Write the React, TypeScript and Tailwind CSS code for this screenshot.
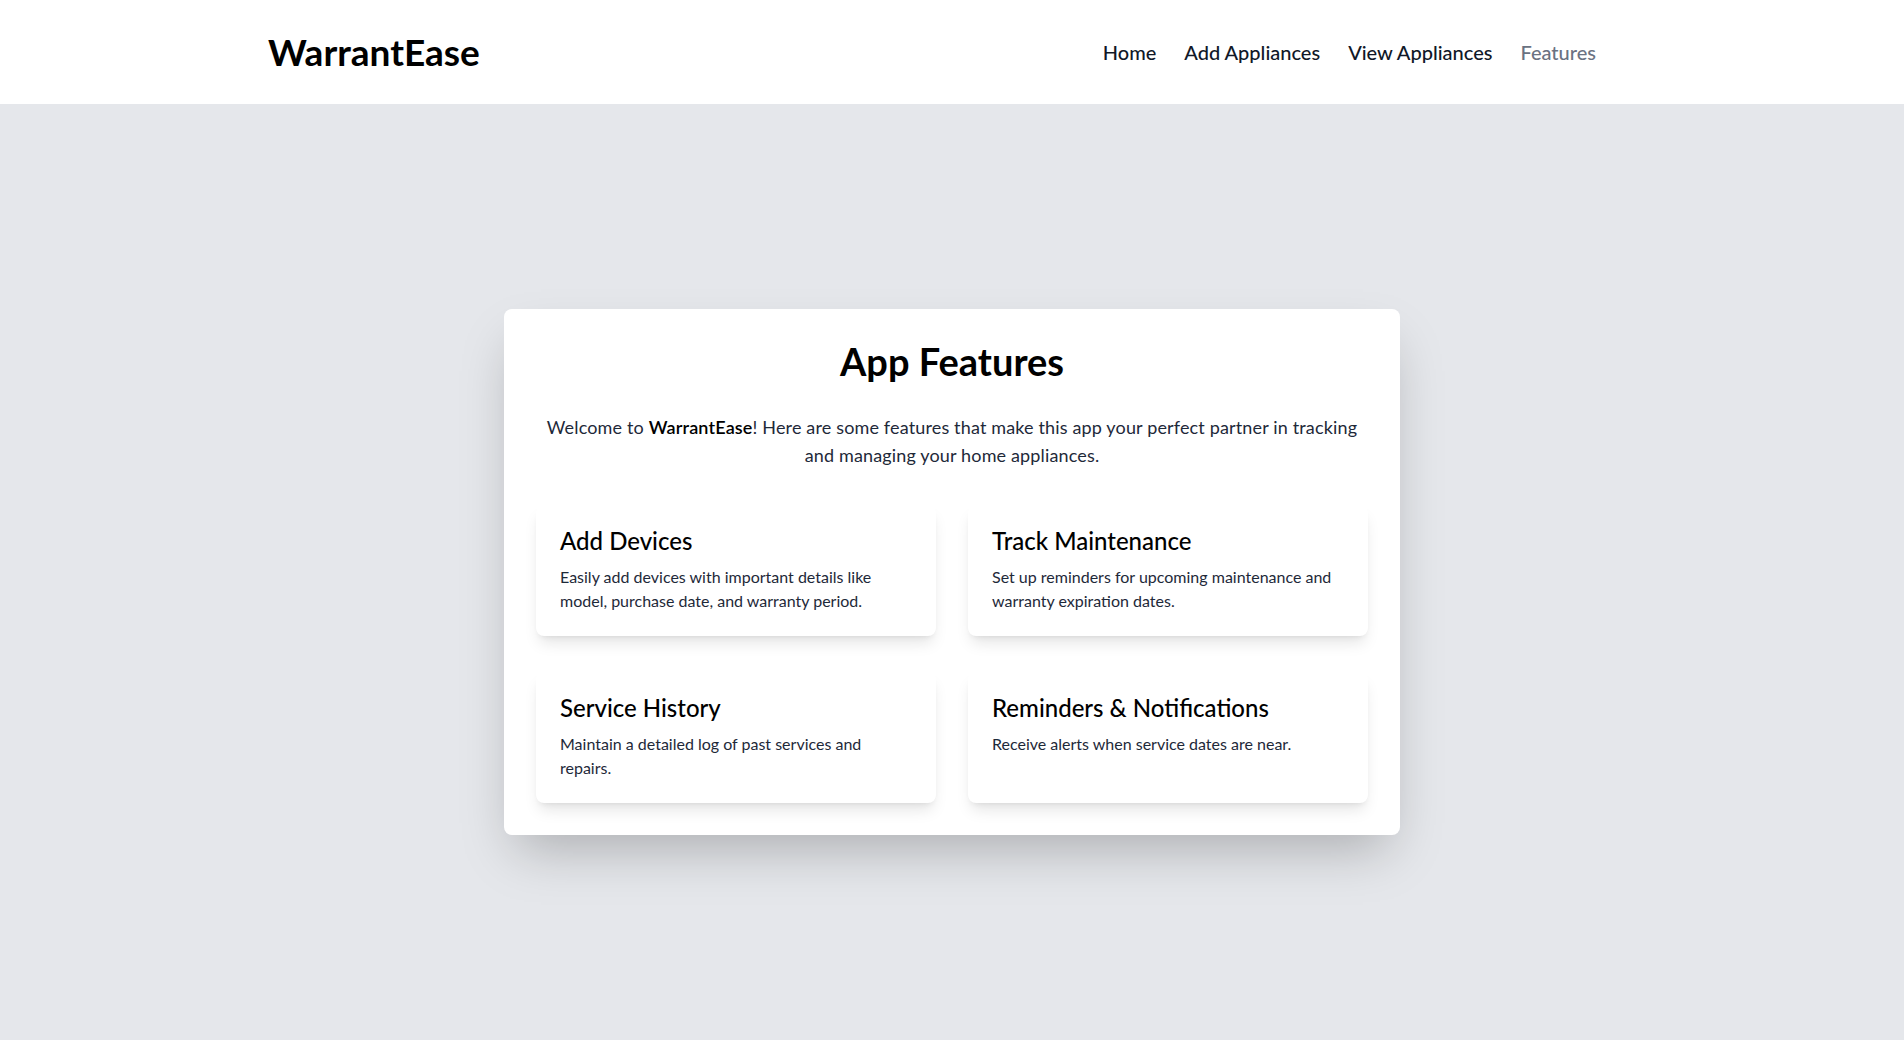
const features = [
  {
    title: 'Add Devices',
    text: 'Easily add devices with important details like model, purchase date, and warranty period.',
  },
  {
    title: 'Track Maintenance',
    text: 'Set up reminders for upcoming maintenance and warranty expiration dates.',
  },
  {
    title: 'Service History',
    text: 'Maintain a detailed log of past services and repairs.',
  },
  {
    title: 'Reminders & Notifications',
    text: 'Receive alerts when service dates are near.',
  },
];

export default function App() {
  return (
    <div className="min-h-screen flex flex-col bg-gray-200 font-['Segoe_UI','Lato',sans-serif] text-black">
      <header className="bg-white">
        <div className="flex items-center justify-between pl-[268px] pr-[308px] h-[104px]">
          <h1 className="text-[37px] leading-10 font-bold">WarrantEase</h1>
          <nav className="flex gap-7 text-xl font-medium">
            <a href="#" className="text-gray-900">Home</a>
            <a href="#" className="text-gray-900">Add Appliances</a>
            <a href="#" className="text-gray-900">View Appliances</a>
            <a href="#" className="text-gray-500">Features</a>
          </nav>
        </div>
      </header>

      <main className="flex-1 flex items-center justify-center">
        <div className="w-full max-w-4xl bg-white p-8 rounded-lg shadow-2xl">
          <h2 className="text-[38px] leading-10 font-bold text-center mb-8">App Features</h2>
          <p className="text-lg tracking-[0.15px] text-gray-800 text-center mb-9">
            Welcome to <strong className="font-semibold text-black">WarrantEase</strong>! Here are some features that
            make this app your perfect partner in tracking and managing your home appliances.
          </p>
          <div className="grid grid-cols-2 gap-x-8 gap-y-9">
            {features.map((f) => (
              <div key={f.title} className="bg-white rounded-lg shadow-lg px-6 py-5 min-h-[131px]">
                <h3 className="text-2xl font-medium mb-2">{f.title}</h3>
                <p className="text-base text-gray-800">{f.text}</p>
              </div>
            ))}
          </div>
        </div>
      </main>
    </div>
  );
}
